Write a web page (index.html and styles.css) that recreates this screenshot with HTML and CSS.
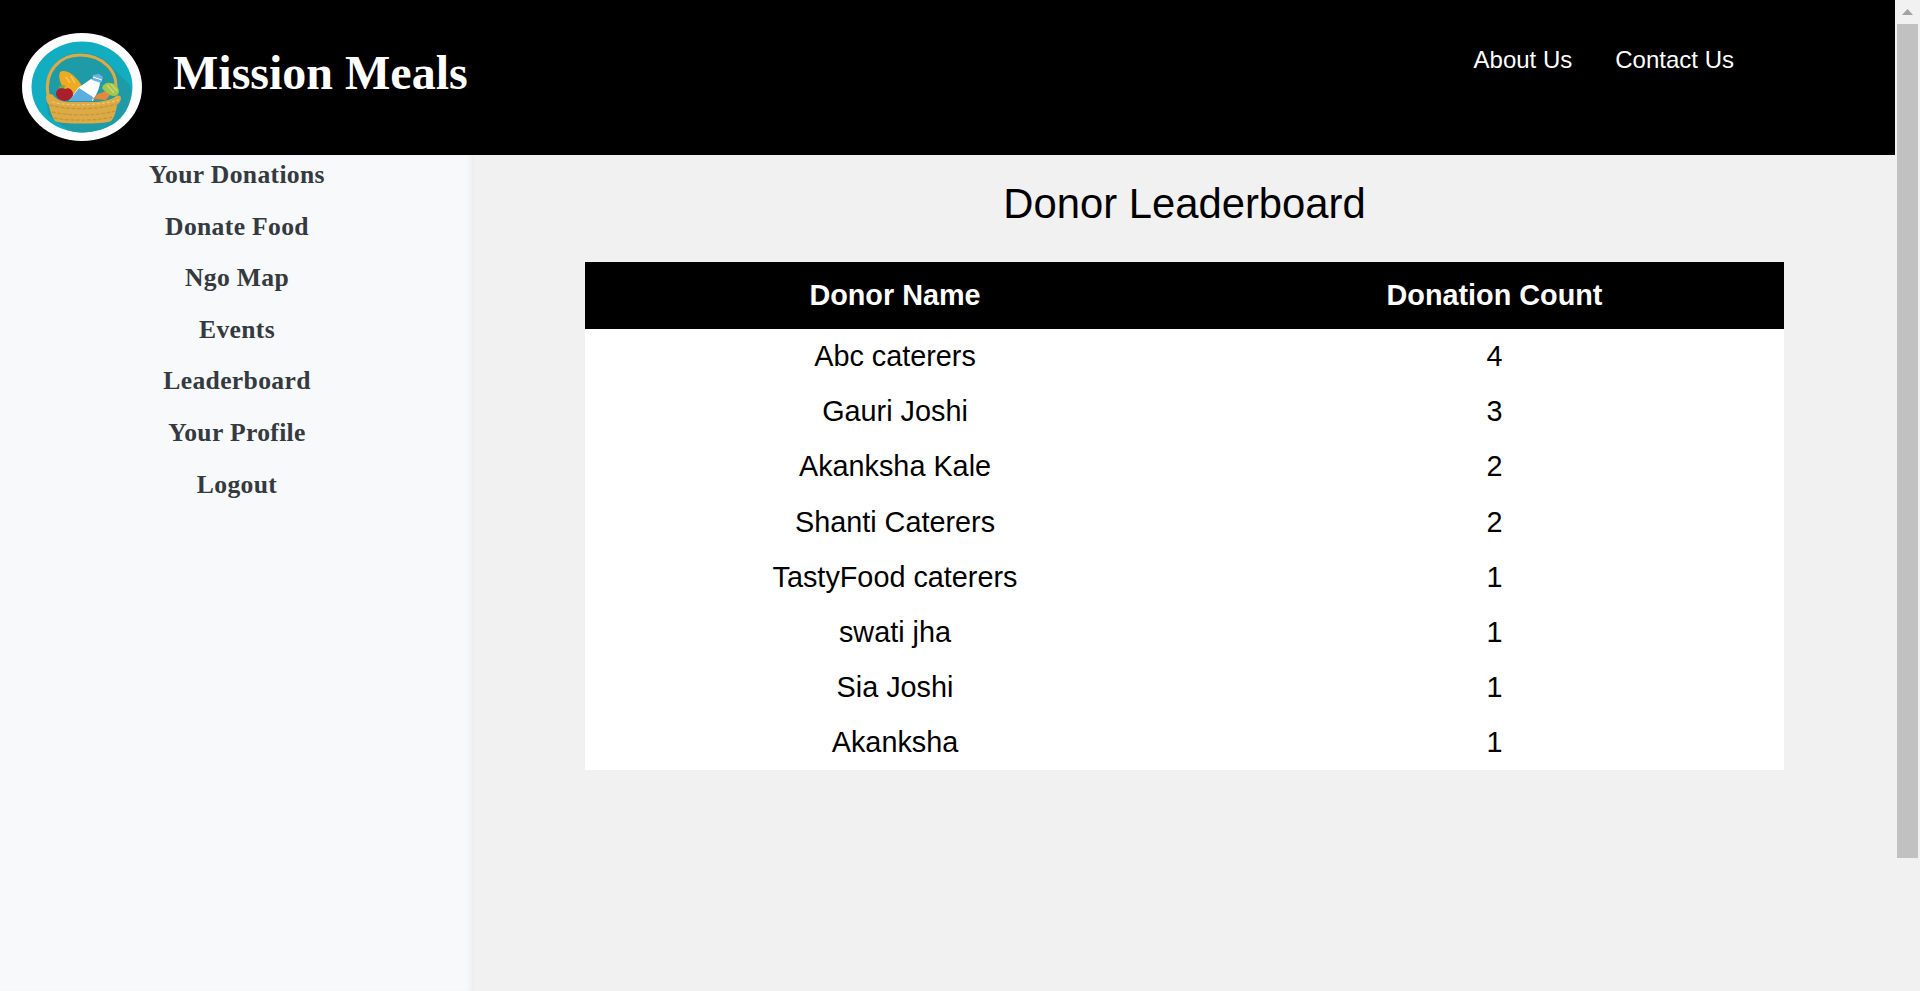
FILE: index.html
```html
<!DOCTYPE html>
<html lang="en">
<head>
<meta charset="utf-8">
<title>Mission Meals</title>
<link rel="stylesheet" href="styles.css">
</head>
<body>
<div class="page">
  <header class="topbar">
    <svg class="logo" viewBox="0 0 120 108" aria-hidden="true">
      <ellipse cx="60" cy="54" rx="60" ry="54" fill="#fff"/>
      <ellipse cx="60" cy="54" rx="50.5" ry="45.5" fill="#12adc1"/>
      <path d="M24 62 C22 36 38 20 58 20 C68 20 76 22 84 28 L108 52 C110 60 109 68 105 76 C98 90 82 99 60 99.500 C54 99.500 50 98.500 46 97 L26 82 Z" fill="#1f9ba8"/>
      <path d="M26 62 C22 38 38 22 58 22 C80 22 98 38 93 60" fill="none" stroke="#dcab45" stroke-width="3"/>
      <path d="M38 39 C42 36 50 40 54 45 C57 48 59 51 60 54 L55 63 C47 61 40 55 38 48 C37 45 37 42 38 39 Z" fill="#edab23"/>
      <path d="M44 44 L48 50 M49 43 L53 50" stroke="#f6cd72" stroke-width="1.200" fill="none"/>
      <path d="M56 55 L69 46 L78 49 C78 55 74 62 71 68 L47 68 Z" fill="#fff"/>
      <path d="M47 68 L57 55 L71 64 L70 68 Z" fill="#5caee0"/>
      <path d="M71 42 L77 41 L81 44 L79 50 L70 47 Z" fill="#6cb5e2"/>
      <path d="M71 44 L80 47" stroke="#fff" stroke-width="1"/>
      <path d="M70 66 L76 61 L84 58 L88 62 L84 67 Z" fill="#e5883a"/>
      <path d="M80 55 C81 51 85 49 88 50 C93 50 97 54 97 59 C96 63 92 64 88 62 C85 60 82 58 80 55 Z" fill="#a4c64b"/>
      <path d="M85 52 L92 60 M89 51 L95 58" stroke="#c8da7c" stroke-width="1.200" fill="none"/>
      <path d="M36 54 L40 56 L44 53 L40 52 Z" fill="#7fa83a"/>
      <path d="M34 61 C34 56 39 54 43 56 C47 54 51 57 51 61 C51 65 46 68 43 68 C39 68 34 65 34 61 Z" fill="#ab1e2b"/>
      <path d="M24 64 C24 61 28 60 31 62 C33 65 38 69 47 69 L70 69 C78 69 90 67 94 63 C97 62 99 63 99 65 C99 68 97 70 95 72 C94 79 92 85 89 88 C85 90 74 90.500 60 90.500 C47 90.500 37 90 33 88 C30 84 28 78 27 72 C25 70 24 67 24 64 Z" fill="#dcab45"/>
      <path d="M28 72 C45 77 75 77 95 71 M30 79 C47 83 75 83 93 78 M32 85 C47 88 75 88 90 84" fill="none" stroke="#c8963a" stroke-width="1.400" stroke-dasharray="4 1.500"/>
      <path d="M30 69 C45 73 75 73 97 67" fill="none" stroke="#efc76f" stroke-width="1.200" stroke-dasharray="3 2"/>
    </svg>
    <h1 class="brand">Mission Meals</h1>
    <nav class="topnav">
      <a href="#">About Us</a>
      <a href="#">Contact Us</a>
    </nav>
  </header>
  <div class="body-row">
    <aside class="sidebar">
      <a href="#">Your Donations</a>
      <a href="#">Donate Food</a>
      <a href="#">Ngo Map</a>
      <a href="#">Events</a>
      <a href="#">Leaderboard</a>
      <a href="#">Your Profile</a>
      <a href="#">Logout</a>
    </aside>
    <main class="content">
      <h2 class="title">Donor Leaderboard</h2>
      <table class="board">
        <thead>
          <tr><th class="name-col">Donor Name</th><th>Donation Count</th></tr>
        </thead>
        <tbody>
          <tr><td>Abc caterers</td><td>4</td></tr>
          <tr><td>Gauri Joshi</td><td>3</td></tr>
          <tr><td>Akanksha Kale</td><td>2</td></tr>
          <tr><td>Shanti Caterers</td><td>2</td></tr>
          <tr><td>TastyFood caterers</td><td>1</td></tr>
          <tr><td>swati jha</td><td>1</td></tr>
          <tr><td>Sia Joshi</td><td>1</td></tr>
          <tr><td>Akanksha</td><td>1</td></tr>
        </tbody>
      </table>
    </main>
  </div>
</div>
<div class="scrollbar" aria-hidden="true">
  <svg class="scroll-arrow" viewBox="0 0 11 6"><path d="M5.500 0 L11 6 L0 6 Z" fill="#a3a3a3"/></svg>
  <div class="scroll-thumb"></div>
</div>
</body>
</html>
```
FILE: styles.css
```css
* { box-sizing: border-box; }
html, body { margin: 0; height: 100%; overflow: hidden; }
body { background: #f1f1f1; font-family: "Liberation Sans", Arial, sans-serif; color: #000; }
.page { width: 1895px; height: 991px; display: flex; flex-direction: column; }
.topbar { height: 155px; background: #000; display: flex; align-items: flex-start; padding: 33px 0 0 22px; color: #fff; flex: none; }
.logo { width: 120px; height: 108px; flex: none; }
.brand { margin: 11.5px 0 0 31px; font: bold 48px/1.15 "Liberation Serif", "Times New Roman", serif; white-space: nowrap; }
.topnav { margin-left: auto; margin-top: 11px; padding-right: 161px; display: flex; gap: 43px; }
.topnav a { color: #fff; text-decoration: none; font-size: 24px; line-height: 32px; }
.body-row { flex: 1; display: flex; min-height: 0; }
.sidebar { width: 474px; flex: none; background: #f8f9fa; box-shadow: inset -6px 0 6px -3px rgba(0, 0, 0, .06); display: flex; flex-direction: column; align-items: center; padding-top: 6px; }
.sidebar a { font: bold 25.6px/28px "Liberation Serif", "Times New Roman", serif; color: #343a40; text-decoration: none; letter-spacing: .35px; margin-bottom: 23.6px; }
.content { flex: 1; min-width: 0; padding: 26px 111px 0; }
.title { margin: 0 0 35px; font-weight: 400; font-size: 41.8px; line-height: 46px; text-align: center; }
.board { width: 100%; border-collapse: collapse; background: #fff; table-layout: fixed; }
.board th { background: #000; color: #fff; height: 67px; font-size: 28.8px; font-weight: 700; padding: 0; }
.board .name-col { width: 620px; }
.board td { height: 55.2px; padding: 0; font-size: 28.8px; text-align: center; }
.board tr:last-child td { height: 54.6px; }
.scrollbar { position: fixed; top: 0; right: 0; bottom: 0; width: 25px; background: #f1f1f1; }
.scroll-arrow { position: absolute; top: 9px; left: 7px; width: 11px; height: 6px; }
.scroll-thumb { position: absolute; top: 24px; left: 2px; width: 21px; height: 834px; background: #c1c1c1; }
```
